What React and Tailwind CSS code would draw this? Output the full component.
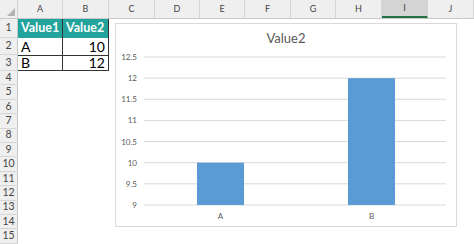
import React from 'react'

const cols = [
  { l: 'A', w: 45 },
  { l: 'B', w: 46 },
  { l: 'C', w: 46 },
  { l: 'D', w: 45 },
  { l: 'E', w: 45 },
  { l: 'F', w: 46 },
  { l: 'G', w: 45 },
  { l: 'H', w: 46 },
  { l: 'I', w: 46, sel: true },
  { l: 'J', w: 46 },
]

const rowHeights = [19, 17, 16, 14.4, 14.4, 14.4, 14.4, 14.4, 14.4, 14.4, 14.4, 14.4, 14.4, 14.4, 14.4]

const ticks = ['12.5', '12', '11.5', '11', '10.5', '10', '9.5', '9']

function Chart() {
  const top = 33
  const step = 21.14
  const bottom = top + step * 7
  const yOf = v => bottom - (v - 9) * 2 * step
  return (
    <div className="absolute left-[115px] top-[23px] w-[342px] h-[204px] border border-[#d9d9d9] bg-white">
      <svg width="340" height="202" className="block">
        <text x="170" y="19" textAnchor="middle" fontSize="13" fill="#595959" fontFamily="Lato, sans-serif">Value2</text>
        {ticks.map((t, i) => (
          <g key={t}>
            <line x1="28" x2="330" y1={top + i * step} y2={top + i * step} stroke="#d9d9d9" strokeWidth="1" />
            <text x="21" y={top + i * step + 3} textAnchor="end" fontSize="8" fill="#595959" fontFamily="Lato, sans-serif">{t}</text>
          </g>
        ))}
        <rect x="81" y={yOf(10)} width="47" height={bottom - yOf(10)} fill="#5b9bd5" />
        <rect x="232" y={yOf(12)} width="47" height={bottom - yOf(12)} fill="#5b9bd5" />
        <text x="104.5" y="195" textAnchor="middle" fontSize="8" fill="#595959" fontFamily="Lato, sans-serif">A</text>
        <text x="255.5" y="195" textAnchor="middle" fontSize="8" fill="#595959" fontFamily="Lato, sans-serif">B</text>
      </svg>
    </div>
  )
}

function Cell({ r, c }) {
  if (r === 0 && c < 2) {
    return (
      <div className="h-full bg-[#22a39b] text-white font-bold text-[12.5px] leading-none flex items-center pl-[3px]">
        {c === 0 ? 'Value1' : 'Value2'}
      </div>
    )
  }
  if (r > 0 && r < 3 && c < 2) {
    const val = c === 0 ? (r === 1 ? 'A' : 'B') : (r === 1 ? '10' : '12')
    return (
      <div className={`h-full text-black text-[14px] leading-none flex items-center px-[3px] ${r === 2 ? 'border-t border-[#333]' : ''} ${c === 1 ? 'justify-end' : ''}`}>
        {val}
      </div>
    )
  }
  return <div className="h-full" />
}

export default function App() {
  return (
    <div className="relative w-[474px] h-[244px] overflow-hidden bg-white" style={{ fontFamily: 'Lato, "Open Sans", sans-serif' }}>
      <div className="flex h-[19px] bg-[#efefef] border-b border-[#c8c8c8]">
        <div className="w-[18px] shrink-0 border-r border-[#d0d0d0] flex items-end justify-end pr-[2px] pb-[2px]">
          <svg width="8" height="8"><polygon points="8,0 8,8 0,8" fill="#b4b4b4" /></svg>
        </div>
        {cols.map(col => (
          <div
            key={col.l}
            style={{ width: col.w }}
            className={`shrink-0 flex items-center justify-center text-[9px] text-[#444] border-r border-[#d6d6d6] ${col.sel ? 'bg-[#d4d4d4] border-b-2 border-b-[#217346]' : ''}`}
          >
            {col.l}
          </div>
        ))}
      </div>
      {rowHeights.map((h, r) => (
        <div key={r} className="flex" style={{ height: h }}>
          <div className="w-[18px] shrink-0 bg-[#efefef] border-r border-[#c8c8c8] border-b border-b-[#d6d6d6] flex items-center justify-center text-[10.5px] text-[#444]">
            {r + 1}
          </div>
          {cols.map((col, c) => (
            <div
              key={col.l}
              style={{ width: col.w }}
              className={`shrink-0 ${r < 3 && c < 2 ? 'border-r border-[#333]' : ''} ${r === 2 && c < 2 ? 'border-b border-[#333]' : ''}`}
            >
              <Cell r={r} c={c} />
            </div>
          ))}
        </div>
      ))}
      <Chart />
    </div>
  )
}
